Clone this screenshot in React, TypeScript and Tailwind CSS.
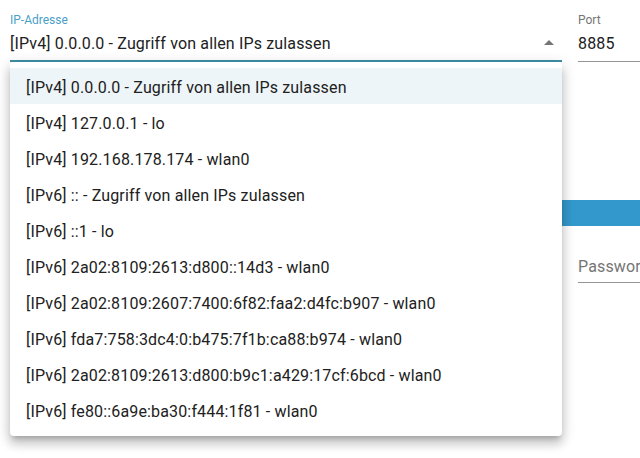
const options = [
  '[IPv4] 0.0.0.0 - Zugriff von allen IPs zulassen',
  '[IPv4] 127.0.0.1 - lo',
  '[IPv4] 192.168.178.174 - wlan0',
  '[IPv6] :: - Zugriff von allen IPs zulassen',
  '[IPv6] ::1 - lo',
  '[IPv6] 2a02:8109:2613:d800::14d3 - wlan0',
  '[IPv6] 2a02:8109:2607:7400:6f82:faa2:d4fc:b907 - wlan0',
  '[IPv6] fda7:758:3dc4:0:b475:7f1b:ca88:b974 - wlan0',
  '[IPv6] 2a02:8109:2613:d800:b9c1:a429:17cf:6bcd - wlan0',
  '[IPv6] fe80::6a9e:ba30:f444:1f81 - wlan0',
]

export default function App() {
  return (
    <div className="relative w-[640px] h-[458px] overflow-hidden bg-white font-['Roboto',sans-serif] text-[#212121] tracking-[0.15px]">
      <div className="pl-[10px] pt-[12px]">
        {/* first row: select + port */}
        <div className="flex gap-4 w-[900px]">
          <div className="relative w-[552px] shrink-0">
            <div className="text-[12px] leading-4 text-[#4a9fc9] tracking-normal">IP-Adresse</div>
            <div className="relative mt-[3px] border-b-2 border-[#3f8fa7] pb-1">
              <div className="pt-[1px] text-[16px] leading-6 whitespace-nowrap">{options[0]}</div>
              <svg className="absolute right-[1px] top-0 w-6 h-6 text-[#757575]" viewBox="0 0 24 24" fill="currentColor">
                <path d="M7 14l5-5 5 5z" />
              </svg>
            </div>

            {/* open menu */}
            <div className="absolute left-0 top-[50px] z-10 w-[552px] rounded bg-white pt-[6px] pb-2 shadow-[0_5px_5px_-3px_rgba(0,0,0,0.2),0_8px_10px_1px_rgba(0,0,0,0.14),0_3px_14px_2px_rgba(0,0,0,0.12)]">
              {options.map((o, i) => (
                <div
                  key={o}
                  className={`flex h-9 items-center px-4 pt-[3px] text-[16px] whitespace-nowrap ${i === 0 ? 'bg-[#eef5f8]' : ''}`}
                >
                  {o}
                </div>
              ))}
            </div>
          </div>

          <div className="w-[200px] shrink-0">
            <div className="text-[12px] leading-4 text-[#757575] tracking-normal">Port</div>
            <div className="mt-[3px] border-b border-[#949494] pb-[5px]">
              <div className="pt-[1px] text-[16px] leading-6">8885</div>
            </div>
          </div>
        </div>

        {/* button bar */}
        <div className="mt-[138px] h-[26px] w-[700px] bg-[#3399cc]" />

        {/* credentials row */}
        <div className="mt-[29px] flex gap-4 w-[900px]">
          <div className="w-[552px] shrink-0" />
          <div className="w-[200px] shrink-0 border-b border-[#949494] pb-[3px]">
            <div className="text-[16px] leading-6 text-[#757575]">Passwort</div>
          </div>
        </div>
      </div>
    </div>
  )
}
